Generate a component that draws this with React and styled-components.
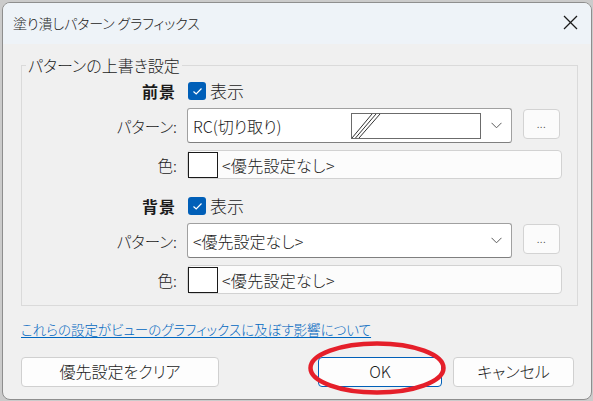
import React from 'react';
import styled, { createGlobalStyle } from 'styled-components';

const GlobalStyle = createGlobalStyle`
  html, body { margin: 0; padding: 0; background: #cbcbcb; }
  body {
    font-family: "Noto Sans CJK JP", "Noto Sans", sans-serif;
    color: #1b1b1b;
    font-feature-settings: "palt";
    font-weight: 300;
  }
  * { box-sizing: border-box; }
`;

const Screen = styled.div`
  width: 593px;
  height: 401px;
  padding: 2px 0 0 2px;
  overflow: hidden;
`;

const Window = styled.div`
  width: 590px;
  height: 398px;
  border: 1px solid #8e8e8e;
  border-radius: 8px;
  background: #f0f0f0;
  overflow: hidden;
  display: flex;
  flex-direction: column;
`;

const TitleBar = styled.div`
  height: 41px;
  flex: none;
  background: #eef3f8;
  display: flex;
  align-items: center;
  padding-left: 10px;
`;

const Title = styled.div`
  flex: 1;
  font-size: 14px;
  letter-spacing: -0.1px;
  line-height: 20px;
  padding-bottom: 2px;
  white-space: pre;
`;

const CloseBox = styled.div`
  width: 42px;
  height: 100%;
  display: flex;
  align-items: center;
  justify-content: center;
  padding-bottom: 2px;
`;

const Body = styled.div`
  flex: 1;
  display: flex;
  flex-direction: column;
  padding: 11px 13px 0 18px;
`;

const Group = styled.fieldset`
  margin: 0;
  padding: 6px 14px 11px 0;
  border: 1px solid #dadada;
  min-width: 0;
`;

const Legend = styled.legend`
  margin-left: 4px;
  padding: 0 2px;
  font-size: 16px;
  line-height: 20px;
`;

const Section = styled.div`
  display: grid;
  grid-template-columns: 155px 375px;
  column-gap: 10px;
  row-gap: 7px;
  align-items: center;
  margin-top: ${p => (p.$second ? '17px' : '0')};
`;

const HeadLabel = styled.div`
  text-align: right;
  font-size: 16px;
  font-weight: 700;
  letter-spacing: 1px;
  line-height: 20px;
  padding-right: 1px;
`;

const Label = styled.div`
  text-align: right;
  font-size: 15.5px;
  line-height: 20px;
  color: #222;
`;

const CheckRow = styled.label`
  display: flex;
  align-items: center;
  gap: 4px;
  height: 20px;
  font-size: 17px;
  line-height: 20px;
  padding-left: 1px;
`;

const CheckBox = styled.span`
  width: 18px;
  height: 18px;
  border-radius: 3px;
  background: #005fb8;
  display: flex;
  align-items: center;
  justify-content: center;
`;

const ComboRow = styled.div`
  display: flex;
  gap: 11px;
  align-items: flex-start;
`;

const Combo = styled.div`
  width: 325px;
  height: 35px;
  background: #ffffff;
  border: 1px solid #a0a0a0;
  border-bottom-color: #7f7f7f;
  border-radius: 3px;
  display: flex;
  align-items: center;
  padding-left: 5px;
`;

const ComboText = styled.div`
  flex: 1;
  font-size: 16px;
  line-height: 20px;
  white-space: nowrap;
`;

const PatternSwatch = styled.div`
  width: 130px;
  height: 26px;
  border: 1px solid #6b6b6b;
  background: #fff;
  display: flex;
`;

const Chevron = styled.div`
  width: 30px;
  display: flex;
  align-items: center;
  justify-content: center;
`;

const DotsButton = styled.div`
  width: 37px;
  height: 30px;
  margin-top: 1px;
  border: 1px solid #d3d3d3;
  border-radius: 4px;
  background: #fbfbfb;
  display: flex;
  align-items: center;
  justify-content: center;
  font-size: 11px;
  color: #555;
  letter-spacing: 0.5px;
  padding-bottom: 2px;
`;

const ColorField = styled.div`
  width: 375px;
  height: 29px;
  border: 1px solid #d2d2d2;
  border-radius: 4px;
  background: #fcfcfc;
  display: flex;
  align-items: center;
  gap: 4px;
`;

const ColorSwatch = styled.div`
  width: 30px;
  height: 26px;
  border: 1px solid #1a1a1a;
  background: #ffffff;
`;

const FieldText = styled.div`
  font-size: 16px;
  line-height: 20px;
  letter-spacing: 0.3px;
`;

const HelpLink = styled.a`
  margin-top: 13px;
  align-self: flex-start;
  font-size: 13.5px;
  line-height: 20px;
  color: #0067c0;
  text-decoration: underline;
  text-underline-offset: 2px;
  cursor: pointer;
`;

const ButtonRow = styled.div`
  margin-top: 18px;
  display: flex;
  align-items: center;
  padding-right: 4px;
`;

const Spacer = styled.div`
  flex: 1;
`;

const Button = styled.button`
  width: ${p => p.$w}px;
  height: 30px;
  border: 1px solid ${p => (p.$primary ? '#005fb8' : '#d0d0d0')};
  border-radius: 4px;
  background: #fdfdfd;
  font-family: "Noto Sans CJK JP", "Noto Sans", sans-serif;
  font-feature-settings: "palt";
  font-weight: 300;
  font-size: 16px;
  color: #1b1b1b;
  padding: 0 0 2px;
  line-height: 20px;
`;

const OkWrap = styled.div`
  position: relative;
  margin-right: 11px;
`;

const Annotation = styled.svg`
  position: absolute;
  left: -10px;
  top: -16px;
  pointer-events: none;
  overflow: visible;
`;

function Check() {
  return (
    <svg width="11" height="9" viewBox="0 0 11 9">
      <polyline points="1.5,4.5 4.2,7 9.5,1.5" fill="none" stroke="#fff" strokeWidth="1.2" />
    </svg>
  );
}

function ChevronIcon() {
  return (
    <svg width="11" height="7" viewBox="0 0 11 7">
      <polyline points="0.5,0.8 5.5,5.8 10.5,0.8" fill="none" stroke="#5a5a5a" strokeWidth="1" />
    </svg>
  );
}

function Hatch() {
  return (
    <svg width="128" height="24" viewBox="0 0 128 24">
      <g stroke="#333" strokeWidth="1" fill="none">
        <line x1="0" y1="24" x2="20" y2="0" />
        <line x1="3.5" y1="24" x2="24" y2="0" />
        <line x1="7" y1="24" x2="28" y2="0" />
      </g>
    </svg>
  );
}

function PatternSection({ head, second, patternText, showSwatch }) {
  return (
    <Section $second={second}>
      <HeadLabel>{head}</HeadLabel>
      <CheckRow>
        <CheckBox><Check /></CheckBox>
        表示
      </CheckRow>
      <Label>パターン:</Label>
      <ComboRow>
        <Combo>
          <ComboText>{patternText}</ComboText>
          {showSwatch && (
            <PatternSwatch><Hatch /></PatternSwatch>
          )}
          <Chevron><ChevronIcon /></Chevron>
        </Combo>
        <DotsButton>...</DotsButton>
      </ComboRow>
      <Label>色:</Label>
      <ColorField>
        <ColorSwatch />
        <FieldText>&lt;優先設定なし&gt;</FieldText>
      </ColorField>
    </Section>
  );
}

export default function App() {
  return (
    <>
      <GlobalStyle />
      <Screen>
        <Window>
          <TitleBar>
            <Title>塗り潰しパターン グラフィックス</Title>
            <CloseBox>
              <svg width="15" height="15" viewBox="0 0 15 15">
                <g stroke="#1a1a1a" strokeWidth="1.3">
                  <line x1="1" y1="1" x2="14" y2="14" />
                  <line x1="14" y1="1" x2="1" y2="14" />
                </g>
              </svg>
            </CloseBox>
          </TitleBar>
          <Body>
            <Group>
              <Legend>パターンの上書き設定</Legend>
              <PatternSection head="前景" patternText="RC(切り取り)" showSwatch />
              <PatternSection head="背景" second patternText="<優先設定なし>" />
            </Group>
            <HelpLink>これらの設定がビューのグラフィックスに及ぼす影響について</HelpLink>
            <ButtonRow>
              <Button $w={198}>優先設定をクリア</Button>
              <Spacer />
              <OkWrap>
                <Button $w={124} $primary>OK</Button>
                <Annotation width="140" height="56" viewBox="0 0 140 56">
                  <ellipse cx="69" cy="27" rx="66.5" ry="24.5" fill="none" stroke="#e51f2a" strokeWidth="4.5" />
                </Annotation>
              </OkWrap>
              <Button $w={121}>キャンセル</Button>
            </ButtonRow>
          </Body>
        </Window>
      </Screen>
    </>
  );
}
